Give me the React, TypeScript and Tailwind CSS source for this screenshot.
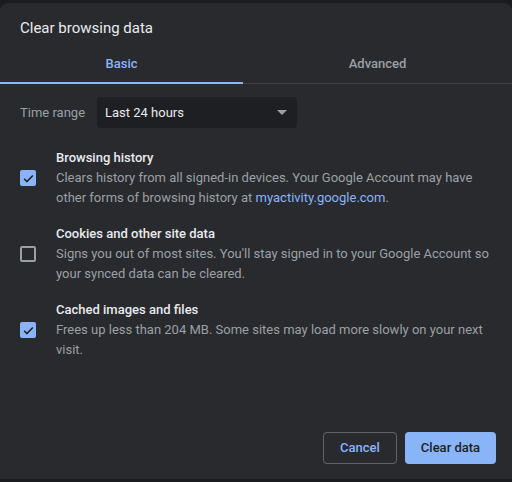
function Check({ on }: { on: boolean }) {
  return on ? (
    <div className="w-4 h-4 rounded-[2px] bg-[#8ab4f8] flex items-center justify-center">
      <svg width="13" height="13" viewBox="0 0 24 24">
        <path d="M4 12.5l5 5L20 6.5" fill="none" stroke="#202124" strokeWidth="3" />
      </svg>
    </div>
  ) : (
    <div className="w-4 h-4 rounded-[2px] border-2 border-[#9aa0a6]" />
  );
}

function Item({ on, title, children }: { on: boolean; title: string; children: React.ReactNode }) {
  return (
    <div className="flex items-center">
      <div className="w-[56px] pl-5 shrink-0">
        <Check on={on} />
      </div>
      <div className="pr-4">
        <div className="text-[13px] font-medium text-[#e8eaed] leading-5">{title}</div>
        <div className="text-[13px] text-[#9aa0a6] leading-5">{children}</div>
      </div>
    </div>
  );
}

export default function App() {
  return (
    <div className="w-[512px] h-[482px] bg-[#1b1c1f] pt-[3px] pb-[3px]" style={{ fontFamily: "Roboto, 'Liberation Sans', sans-serif" }}>
      <div className="h-full bg-[#292a2d] rounded-t-lg flex flex-col">
        <div className="px-5 pt-[14px] h-[42px] text-[15px] text-[#e8eaed]">Clear browsing data</div>
        <div className="flex border-b border-[#3c4043] h-[39px]">
          <div className="w-[243px] flex items-center justify-center text-[13px] font-medium text-[#8ab4f8] border-b-2 border-[#8ab4f8] -mb-px">Basic</div>
          <div className="flex-1 flex items-center justify-center text-[13px] font-medium text-[#9aa0a6]">Advanced</div>
        </div>
        <div className="flex items-center px-5 mt-[13px]">
          <span className="text-[13px] text-[#9aa0a6] w-[77px]">Time range</span>
          <div className="w-[200px] h-[31px] bg-[#1e1f22] rounded flex items-center justify-between pl-2 pr-[10px]">
            <span className="text-[13px] text-[#e8eaed]">Last 24 hours</span>
            <svg width="10" height="5" viewBox="0 0 10 5"><path d="M0 0h10L5 5z" fill="#9aa0a6" /></svg>
          </div>
        </div>
        <div className="flex flex-col gap-[16px] mt-[20px]">
          <Item on title="Browsing history">
            Clears history from all signed-in devices. Your Google Account may have other forms of browsing history at{" "}
            <span className="text-[#8ab4f8]">myactivity.google.com</span>.
          </Item>
          <Item on={false} title="Cookies and other site data">
            Signs you out of most sites. You'll stay signed in to your Google Account so your synced data can be cleared.
          </Item>
          <Item on title="Cached images and files">
            Frees up less than 204 MB. Some sites may load more slowly on your next visit.
          </Item>
        </div>
        <div className="mt-auto flex justify-end gap-2 px-4 pb-[15px]">
          <button className="h-[32px] w-[74px] rounded border border-[#5f6368] text-[13px] font-medium text-[#8ab4f8]">Cancel</button>
          <button className="h-[32px] w-[91px] rounded bg-[#8ab4f8] text-[13px] font-medium text-[#202124]">Clear data</button>
        </div>
      </div>
    </div>
  );
}
